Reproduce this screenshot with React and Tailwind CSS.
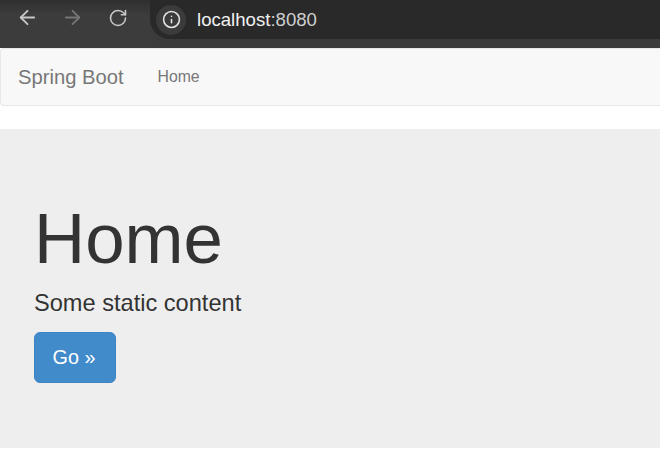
import { ArrowLeft, ArrowRight, RotateCw, Info } from "lucide-react";

export default function App() {
  return (
    <div className="h-[458px] w-[660px] overflow-hidden bg-white font-['Liberation_Sans',Arial,sans-serif]">
      {/* browser toolbar */}
      <div className="flex h-12 bg-[#3b3b3b]">
        <div className="flex w-[150px] flex-shrink-0 items-start bg-gradient-to-b from-[#2f2f2f] to-[#3c3c3c] to-[30%] pt-[6px]">
          <ArrowLeft size={23} strokeWidth={1.9} className="ml-4 text-[#c7c7c7]" />
          <ArrowRight size={23} strokeWidth={1.9} className="ml-[22px] text-[#757575]" />
          <RotateCw size={20} strokeWidth={1.9} className="ml-6 mt-[2px] text-[#c7c7c7]" />
        </div>
        <div className="flex h-[39px] flex-1 items-center rounded-bl-[20px] bg-[#292929]">
          <div className="ml-[6px] flex h-[30px] w-[30px] items-center justify-center rounded-full bg-[#3b3b3b]">
            <Info size={19} strokeWidth={2} className="text-[#e3e3e3]" />
          </div>
          <span className="ml-[11px] text-[18.6px] text-[#f0f0f0]">
            localhost<span className="text-[#d0d0d0]">:8080</span>
          </span>
        </div>
      </div>

      {/* navbar */}
      <nav className="mb-[23px] flex h-[58px] items-center rounded-l-[4px] border border-r-0 border-[#e7e7e7] bg-[#f8f8f8]">
        <a className="ml-[17px] text-[20.2px] text-[#777777]">Spring Boot</a>
        <a className="ml-[34px] text-[15.8px] text-[#777777]">Home</a>
      </nav>

      {/* jumbotron */}
      <div className="h-[319px] bg-[#eeeeee] pl-[34px] pt-[72px]">
        <h1 className="text-[70.8px] leading-[76px] text-[#333333]">Home</h1>
        <p className="mt-[10px] text-[23.6px] leading-[33px] text-[#333333]">Some static content</p>
        <button className="mt-3 flex h-[51px] w-[82px] items-center justify-center rounded-[6px] border border-[#3c84c4] bg-[#428bca] pr-[2px] text-[19.8px] text-white">
          Go »
        </button>
      </div>
    </div>
  );
}
